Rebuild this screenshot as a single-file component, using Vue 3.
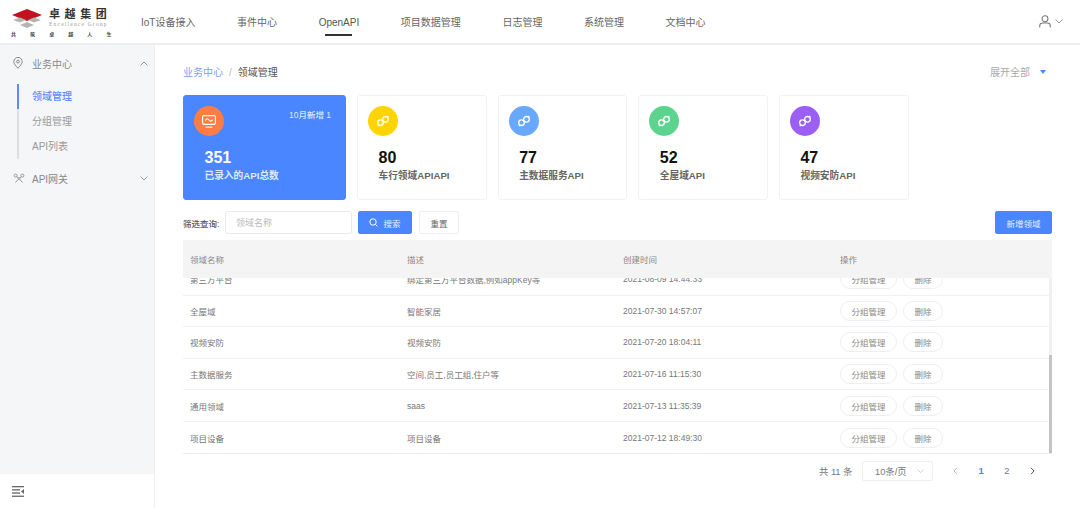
<template>
  <div class="page">
    <header class="topbar">
      <div class="logo">
        <svg class="logo-mark" width="30" height="19" viewBox="0 0 30 19">
          <path d="M15 0 L30 6 L15 12 L0 6 Z" fill="#c0121f" />
          <path d="M1 11 L8 8.5 L14 11 L8 13.5 Z M16 11 L22 8.5 L29 11 L22 13.5 Z M8 16 L15 13 L22 16 L15 19 Z" fill="#b5b5b0" />
        </svg>
        <div class="logo-text">
          <div class="logo-name">卓越集团</div>
          <div class="logo-en">Excellence Group</div>
        </div>
        <div class="logo-slogan">
          <span v-for="c in slogan" :key="c">{{ c }}</span>
        </div>
      </div>
      <nav class="nav">
        <a v-for="n in navItems" :key="n" class="nav-item" :class="{ active: n === 'OpenAPI' }">{{ n }}</a>
      </nav>
      <div class="user">
        <svg width="12" height="13" viewBox="0 0 13 14" fill="none" stroke="#777" stroke-width="1.1">
          <circle cx="6.5" cy="4" r="3.2" />
          <path d="M0.8 13.5 V11.5 C0.8 9.6 2.4 8.6 4 8.6 H9 C10.6 8.6 12.2 9.6 12.2 11.5 V13.5" />
        </svg>
        <svg width="8" height="5" viewBox="0 0 8 5" fill="none" stroke="#999" stroke-width="1"><path d="M0.5 0.5 L4 4 L7.5 0.5" /></svg>
      </div>
    </header>

    <div class="body">
      <aside class="sidebar">
        <div class="menu">
          <div class="menu-title">
            <svg width="10" height="12" viewBox="0 0 10 12" fill="none" stroke="#888" stroke-width="1">
              <path d="M5 11.3 C2.8 8.8 0.8 6.8 0.8 4.6 A4.2 4.2 0 0 1 9.2 4.6 C9.2 6.8 7.2 8.8 5 11.3 Z" />
              <circle cx="5" cy="4.6" r="1.4" />
            </svg>
            <span>业务中心</span>
            <svg class="chev" width="8" height="5" viewBox="0 0 8 5" fill="none" stroke="#999" stroke-width="1"><path d="M0.5 4.5 L4 1 L7.5 4.5" /></svg>
          </div>
          <div class="submenu">
            <div class="sub-item active">领域管理</div>
            <div class="sub-item">分组管理</div>
            <div class="sub-item">API列表</div>
          </div>
          <div class="menu-title second">
            <svg width="12" height="11" viewBox="0 0 12 11" fill="none" stroke="#999" stroke-width="1">
              <circle cx="2.6" cy="2.6" r="1.5" />
              <circle cx="9.4" cy="2.6" r="1.5" />
              <circle cx="6" cy="5.6" r="1" />
              <path d="M3.7 3.7 L5.2 4.9 M8.3 3.7 L6.8 4.9 M5.2 6.4 L2.4 9.6 M6.8 6.4 L9.6 9.6" />
            </svg>
            <span>API网关</span>
            <svg class="chev" width="8" height="5" viewBox="0 0 8 5" fill="none" stroke="#999" stroke-width="1"><path d="M0.5 0.5 L4 4 L7.5 0.5" /></svg>
          </div>
        </div>
        <div class="collapse">
          <svg width="12" height="11" viewBox="0 0 12 11" fill="#666">
            <rect x="0" y="0" width="12" height="1.3" />
            <rect x="0" y="3.2" width="8" height="1.3" />
            <rect x="0" y="6.4" width="8" height="1.3" />
            <rect x="0" y="9.6" width="12" height="1.3" />
            <path d="M12 3 V8 L9 5.5 Z" />
          </svg>
        </div>
      </aside>

      <main class="main">
        <div class="crumb-row">
          <div class="crumbs">
            <span class="crumb-link">业务中心</span>
            <span class="crumb-sep">/</span>
            <span class="crumb-cur">领域管理</span>
          </div>
          <div class="expand">
            <span>展开全部</span>
            <i class="triangle"></i>
          </div>
        </div>

        <div class="cards">
          <div class="card primary">
            <div class="card-top">
              <div class="circle" style="background: #ff7d45">
                <svg width="14" height="13" viewBox="0 0 14 13" fill="none" stroke="#fff" stroke-width="1.1">
                  <rect x="0.6" y="0.6" width="12.8" height="8.8" rx="1.3" />
                  <path d="M3.4 5.4 C4.6 3.2 5.8 3.2 7 5 C8.2 6.6 9.4 6.6 10.6 4.6" />
                  <path d="M3.5 12.2 H10.5" />
                </svg>
              </div>
              <span class="new-tag">10月新增 1</span>
            </div>
            <div class="card-num">351</div>
            <div class="card-label">已录入的API总数</div>
          </div>
          <div v-for="c in cards" :key="c.label" class="card">
            <div class="card-top">
              <div class="circle" :style="{ background: c.color }">
                <svg width="14" height="14" viewBox="0 0 14 14" fill="none" stroke="#fff" stroke-width="1.3">
                  <circle cx="4.5" cy="8.7" r="2.8" />
                  <circle cx="9.5" cy="5.3" r="2.8" />
                  <path d="M1.8 12.2 L2.6 11 M12.2 1.8 L11.4 3" />
                </svg>
              </div>
            </div>
            <div class="card-num">{{ c.num }}</div>
            <div class="card-label">{{ c.label }}</div>
          </div>
        </div>

        <div class="filter">
          <span class="filter-label">筛选查询:</span>
          <input class="filter-input" placeholder="领域名称" />
          <button class="btn btn-blue btn-search">
            <svg width="9" height="9" viewBox="0 0 9 9" fill="none" stroke="#fff" stroke-width="1"><circle cx="4" cy="4" r="3.2" /><path d="M6.4 6.4 L8.4 8.4" /></svg>
            搜索
          </button>
          <button class="btn btn-reset">重置</button>
          <button class="btn btn-blue btn-add">新增领域</button>
        </div>

        <div class="table">
          <div class="row head">
            <div class="c1">领域名称</div>
            <div class="c2">描述</div>
            <div class="c3">创建时间</div>
            <div class="c4">操作</div>
          </div>
          <div class="rows">
            <div class="rows-inner">
              <div v-for="r in rows" :key="r.name" class="row">
                <div class="c1">{{ r.name }}</div>
                <div class="c2">{{ r.desc }}</div>
                <div class="c3">{{ r.time }}</div>
                <div class="c4">
                  <button class="pill pill-wide">分组管理</button>
                  <button class="pill">删除</button>
                </div>
              </div>
            </div>
            <div class="scrollbar"><div class="thumb"></div></div>
          </div>
        </div>

        <div class="pager">
          <span class="total">共 11 条</span>
          <div class="size">
            <span>10条/页</span>
            <svg width="7" height="4" viewBox="0 0 7 4" fill="none" stroke="#ccc" stroke-width="0.9"><path d="M0.5 0.5 L3.5 3.5 L6.5 0.5" /></svg>
          </div>
          <div class="pages">
            <svg width="5" height="8" viewBox="0 0 5 8" fill="none" stroke="#bbb" stroke-width="1"><path d="M4 0.8 L1 4 L4 7.2" /></svg>
            <span class="page-no current">1</span>
            <span class="page-no">2</span>
            <svg width="5" height="8" viewBox="0 0 5 8" fill="none" stroke="#555" stroke-width="1"><path d="M1 0.8 L4 4 L1 7.2" /></svg>
          </div>
        </div>
      </main>
    </div>
  </div>
</template>

<script setup>
const slogan = ['共', '筑', '卓', '越', '人', '生']

const navItems = ['IoT设备接入', '事件中心', 'OpenAPI', '项目数据管理', '日志管理', '系统管理', '文档中心']

const cards = [
  { num: 80, label: '车行领域APIAPI', color: '#ffd400' },
  { num: 77, label: '主数据服务API', color: '#68a8ff' },
  { num: 52, label: '全屋域API', color: '#5cd48f' },
  { num: 47, label: '视频安防API', color: '#9b5ff5' }
]

const rows = [
  { name: '第三方平台', desc: '绑定第三方平台数据,例如appKey等', time: '2021-08-09 14:44:33' },
  { name: '全屋域', desc: '智能家居', time: '2021-07-30 14:57:07' },
  { name: '视频安防', desc: '视频安防', time: '2021-07-20 18:04:11' },
  { name: '主数据服务', desc: '空间,员工,员工组,住户等', time: '2021-07-16 11:15:30' },
  { name: '通用领域', desc: 'saas', time: '2021-07-13 11:35:39' },
  { name: '项目设备', desc: '项目设备', time: '2021-07-12 18:49:30' }
]
</script>

<style>
html, body {
  margin: 0;
  background: #fff;
}
</style>

<style scoped>
.page {
  width: 1080px;
  height: 508px;
  overflow: hidden;
  display: flex;
  flex-direction: column;
  font-family: "Liberation Sans", "Noto Sans CJK SC", sans-serif;
  color: #666;
}

/* шапка */
.topbar {
  height: 43px;
  flex-shrink: 0;
  display: flex;
  align-items: center;
  border-bottom: 2px solid #eceef0;
  padding-left: 11px;
  padding-right: 17px;
}
.logo {
  width: 97px;
  height: 43px;
  flex-shrink: 0;
  display: grid;
  grid-template-columns: 38px 1fr;
  grid-template-rows: 30px 8px;
  align-content: start;
  align-items: center;
}
.logo-mark {
  margin-left: 1px;
  margin-top: 7px;
}
.logo-text {
  padding-top: 6px;
}
.logo-name {
  font-family: "Liberation Serif", "Noto Sans CJK SC", serif;
  font-size: 11px;
  line-height: 13px;
  font-weight: 700;
  letter-spacing: 4.6px;
  color: #333;
  white-space: nowrap;
}
.logo-en {
  font-family: "Liberation Serif", serif;
  font-size: 5.5px;
  line-height: 7px;
  letter-spacing: 1.2px;
  color: #999;
  white-space: nowrap;
}
.logo-slogan {
  grid-column: 1 / 3;
  display: flex;
  justify-content: space-between;
  font-size: 5px;
  line-height: 8px;
  font-weight: 700;
  color: #444;
}
.nav {
  display: flex;
  gap: 41.6px;
  margin-left: 33px;
  height: 100%;
}
.nav-item {
  position: relative;
  font-size: 10px;
  line-height: 45px;
  color: #666;
  white-space: nowrap;
}
.nav-item.active {
  color: #555;
}
.nav-item.active::after {
  content: "";
  position: absolute;
  left: 6px;
  right: 7px;
  bottom: 7px;
  height: 2px;
  background: #333;
}
.user {
  margin-left: auto;
  display: flex;
  align-items: center;
  gap: 4px;
}

.body {
  flex: 1;
  display: flex;
  min-height: 0;
}

/* боковое меню */
.sidebar {
  width: 155px;
  flex-shrink: 0;
  display: flex;
  flex-direction: column;
  border-right: 1px solid #eef0f2;
  box-sizing: border-box;
}
.menu {
  flex: 1;
  background: #f5f6f8;
  padding-top: 7px;
}
.menu-title {
  height: 22px;
  display: flex;
  align-items: center;
  padding: 0 6px 0 13px;
  font-size: 10px;
  color: #888;
}
.menu-title span {
  margin-left: 9px;
}
.menu-title.second {
  margin-top: 8px;
}
.menu-title.second span {
  margin-left: 7px;
}
.chev {
  margin-left: auto;
}
.submenu {
  margin: 10px 0 0 17px;
  border-left: 2px solid #dcdee2;
  height: 75px;
  display: flex;
  flex-direction: column;
}
.sub-item {
  height: 25px;
  line-height: 25px;
  margin-left: -2px;
  padding-left: 13px;
  border-left: 2px solid transparent;
  font-size: 10px;
  color: #999;
}
.sub-item.active {
  border-left-color: #5b8cff;
  color: #5b8cff;
  font-weight: 500;
}
.collapse {
  height: 34px;
  flex-shrink: 0;
  display: flex;
  align-items: center;
  padding-left: 12px;
  background: #fff;
}

/* основная часть */
.main {
  flex: 1;
  min-width: 0;
  padding: 0 28px;
}
.crumb-row {
  height: 50px;
  padding-top: 3px;
  box-sizing: border-box;
  display: flex;
  align-items: center;
  justify-content: space-between;
  font-size: 10px;
}
.crumb-link {
  color: #7b9eff;
}
.crumb-sep {
  margin: 0 6px;
  color: #bbb;
}
.crumb-cur {
  color: #555;
}
.expand {
  display: flex;
  align-items: center;
  color: #aaa;
  gap: 10px;
  padding-right: 5px;
  margin-right: 1px;
}
.triangle {
  width: 0;
  height: 0;
  border-left: 3.5px solid transparent;
  border-right: 3.5px solid transparent;
  border-top: 4px solid #4a86ff;
}

/* карточки */
.cards {
  display: flex;
  gap: 11px;
}
.card {
  width: 129.67px;
  height: 105px;
  box-sizing: border-box;
  padding: 10px 11px 0 10px;
  border: 1px solid #f1f2f4;
  border-radius: 3px;
  background: #fff;
}
.card.primary {
  width: 163px;
  background: #4a86ff;
  border-color: #4a86ff;
  color: #fff;
}
.card-top {
  display: flex;
  justify-content: space-between;
  height: 30px;
}
.circle {
  width: 30px;
  height: 30px;
  border-radius: 50%;
  display: flex;
  align-items: center;
  justify-content: center;
}
.new-tag {
  font-size: 8.5px;
  line-height: 10px;
  margin-top: 4px;
  margin-right: 3px;
  color: #dfe9ff;
  font-weight: 500;
}
.card-num {
  margin: 12px 0 0 10.5px;
  font-size: 16px;
  line-height: 20px;
  font-weight: 700;
  color: #111;
}
.card-label {
  margin: 1px 0 0 10.5px;
  font-size: 9.7px;
  line-height: 14px;
  font-weight: 700;
  color: #666;
  white-space: nowrap;
}
.card.primary .card-num {
  color: #fff;
}
.card.primary .card-label {
  color: #dfe9ff;
}

/* фильтр */
.filter {
  height: 23px;
  margin-top: 11px;
  display: flex;
  align-items: center;
}
.filter-label {
  width: 42px;
  font-size: 8.5px;
  font-weight: 500;
  color: #555;
  white-space: nowrap;
}
.filter-input {
  width: 127px;
  height: 23px;
  box-sizing: border-box;
  padding: 0 10px;
  border: 1px solid #e8eaee;
  border-radius: 3px;
  font-family: inherit;
  font-size: 9px;
  outline: none;
}
.filter-input::placeholder {
  color: #bbb;
}
.btn {
  height: 23px;
  box-sizing: border-box;
  border-radius: 2px;
  border: 1px solid #eceef0;
  font-family: inherit;
  font-size: 8.5px;
  padding: 0;
  background: #fff;
  color: #666;
  display: flex;
  align-items: center;
  justify-content: center;
}
.btn-blue {
  background: #4a86ff;
  border-color: #4a86ff;
  color: #e6eeff;
}
.btn-search {
  width: 54px;
  margin-left: 6px;
  gap: 5px;
}
.btn-reset {
  width: 40px;
  margin-left: 7px;
}
.btn-add {
  width: 57px;
  margin-left: auto;
}

/* таблица */
.table {
  margin-top: 6px;
  border-bottom: 1px solid #e9edf7;
}
.row {
  height: 31.6px;
  box-sizing: border-box;
  display: flex;
  align-items: center;
  font-size: 8.5px;
  color: #777;
  border-bottom: 1px solid #eef1f8;
}
.row.head {
  height: 38px;
  background: #f4f4f4;
  border-bottom: 0;
  position: relative;
  color: #888;
}
.c1 {
  width: 224px;
  padding-left: 7px;
  box-sizing: border-box;
}
.c2 {
  width: 216px;
}
.c3 {
  width: 217px;
}
.c4 {
  display: flex;
  gap: 6px;
}
.rows {
  position: relative;
  height: 175px;
  overflow: hidden;
}
.rows-inner {
  margin-top: -14px;
}
.rows-inner .row:last-child {
  border-bottom: 0;
}
.pill {
  width: 40px;
  height: 20px;
  box-sizing: border-box;
  padding: 0;
  border: 1px solid #eceef0;
  border-radius: 10px;
  background: #fff;
  font-family: inherit;
  font-size: 8.5px;
  color: #888;
}
.pill-wide {
  width: 57px;
}
.scrollbar {
  position: absolute;
  top: 0;
  right: 0;
  bottom: 0;
  width: 3px;
  background: #f0f0f0;
}
.thumb {
  position: absolute;
  left: 0;
  right: 0;
  bottom: 0;
  height: 98px;
  background: #c4c4c4;
}

/* пагинация */
.pager {
  margin-top: 7px;
  display: flex;
  align-items: center;
  font-size: 9.3px;
  padding-left: 636px;
  color: #777;
}
.total {
  width: 43px;
  white-space: nowrap;
}
.size {
  width: 71px;
  height: 20px;
  box-sizing: border-box;
  border: 1px solid #eceef0;
  border-radius: 2px;
  display: flex;
  align-items: center;
  justify-content: space-between;
  padding: 0 8px 0 12px;
}
.pages {
  margin-left: 20px;
  width: 82px;
  display: flex;
  align-items: center;
  justify-content: space-between;
}
.page-no.current {
  color: #4a86ff;
  font-weight: 700;
}
</style>
